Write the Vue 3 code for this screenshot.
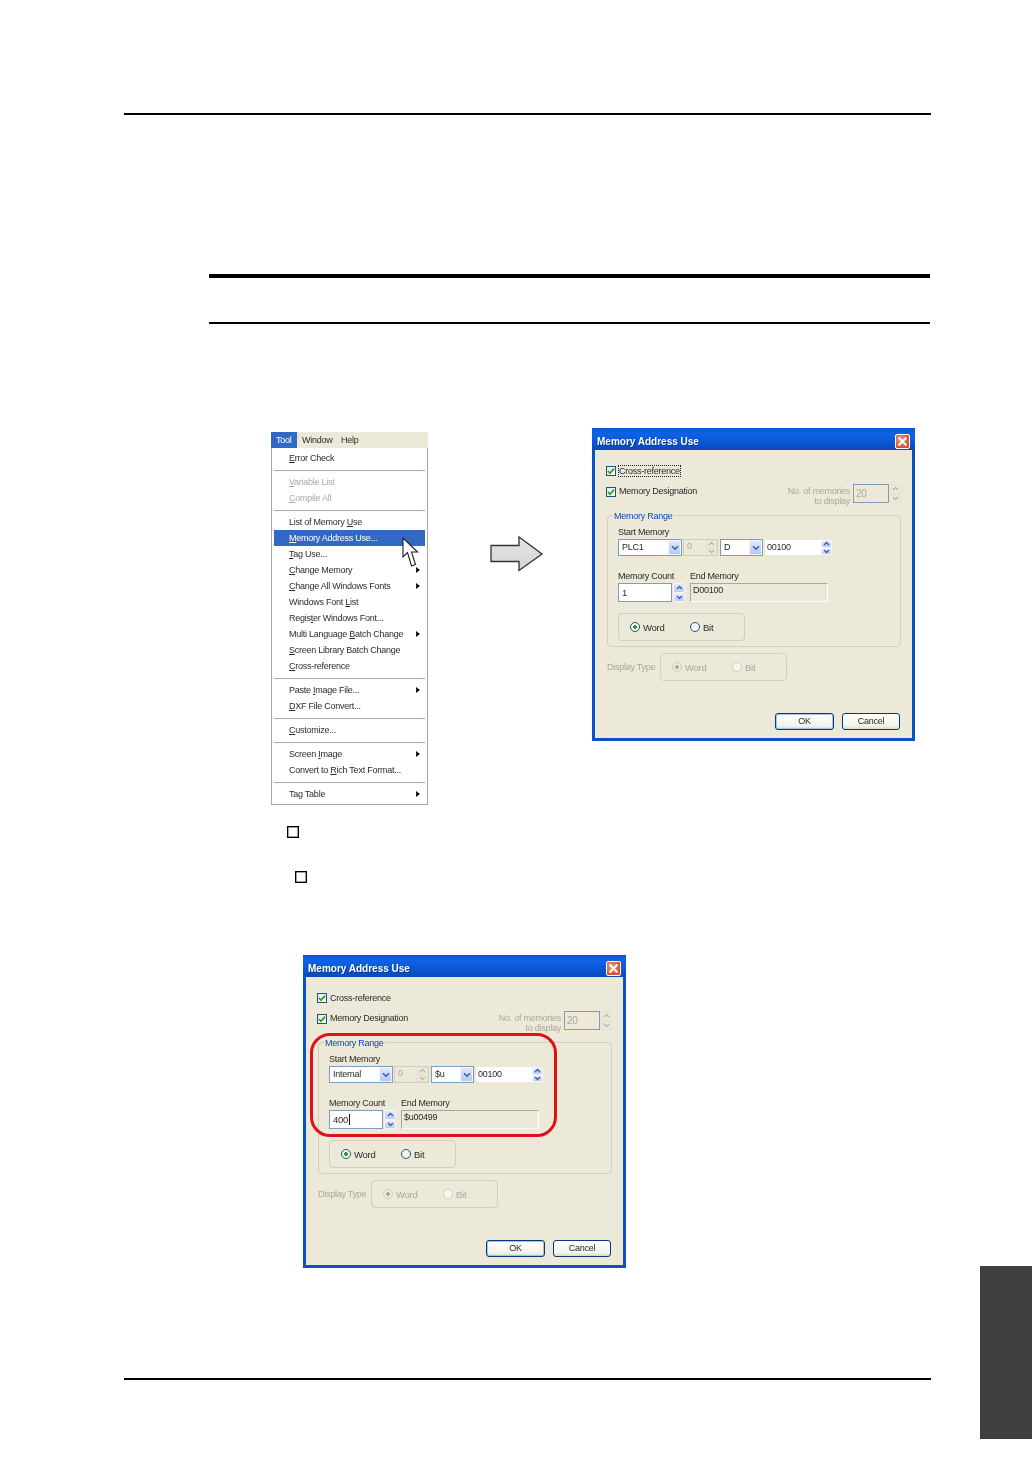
<script setup>
const menu = [
  { h: ['', 'E', 'rror Check'] },
  { sep: true },
  { h: ['', 'V', 'ariable List'], off: true },
  { h: ['', 'C', 'ompile All'], off: true },
  { sep: true },
  { h: ['List of Memory ', 'U', 'se'] },
  { h: ['', 'M', 'emory Address Use...'], active: true },
  { h: ['', 'T', 'ag Use...'] },
  { h: ['', 'C', 'hange Memory'], sub: true },
  { h: ['', 'C', 'hange All Windows Fonts'], sub: true },
  { h: ['Windows Font ', 'L', 'ist'] },
  { h: ['Regis', 't', 'er Windows Font...'] },
  { h: ['Multi Language ', 'B', 'atch Change'], sub: true },
  { h: ['', 'S', 'creen Library Batch Change'] },
  { h: ['', 'C', 'ross-reference'] },
  { sep: true },
  { h: ['Paste ', 'I', 'mage File...'], sub: true },
  { h: ['', 'D', 'XF File Convert...'] },
  { sep: true },
  { h: ['', 'C', 'ustomize...'] },
  { sep: true },
  { h: ['Screen ', 'I', 'mage'], sub: true },
  { h: ['Convert to ', 'R', 'ich Text Format...'] },
  { sep: true },
  { h: ['Ta', 'g', ' Table'], sub: true },
]
const dialogs = [
  { key: 'a', device: 'PLC1', kind: 'D', count: '1', end: 'D00100', focus: true, ring: false, caret: false },
  { key: 'b', device: 'Internal', kind: '$u', count: '400', end: '$u00499', focus: false, ring: true, caret: true },
]
</script>

<template>
  <div class="page">
    <div class="rule-top"></div>
    <div class="note"></div>

    <div class="figure">
      <div class="menu">
        <div class="menubar">
          <span class="top on">Tool</span><span class="top">Window</span><span class="top">Help</span>
        </div>
        <div class="menulist">
          <template v-for="(m, i) in menu" :key="i">
            <div v-if="m.sep" class="sep"></div>
            <div v-else class="item" :class="{ off: m.off, active: m.active, sub: m.sub }">{{ m.h[0] }}<u>{{ m.h[1] }}</u>{{ m.h[2] }}</div>
          </template>
        </div>
        <svg class="cursor" width="17" height="31" viewBox="0 0 17 31">
          <path d="M1 1V20L5.5 15.5 9.5 29 13.5 27.5 9.5 15H15.5Z" fill="#fff" stroke="#222" stroke-width="1.1"/>
        </svg>
      </div>

      <svg class="arrow" width="54" height="36" viewBox="0 0 54 36">
        <defs>
          <linearGradient id="arrowFill" x1="0" y1="0" x2="0" y2="1">
            <stop offset="0" stop-color="#e6e6e6"/>
            <stop offset="1" stop-color="#d4d4d4"/>
          </linearGradient>
        </defs>
        <path d="M1 9.5H29V1L52 18 29 34.5V25.5H1Z" fill="url(#arrowFill)" stroke="#333" stroke-width="1.3"/>
      </svg>

      <div class="boxes">
        <div class="box"></div>
        <div class="box second"></div>
      </div>

      <div v-for="d in dialogs" :key="d.key" class="dialog" :class="'dialog-' + d.key">
        <div class="titlebar">
          <span class="title">Memory Address Use</span>
          <span class="close">
            <svg width="11" height="11" viewBox="0 0 11 11"><path d="M1.5 1.5L9.5 9.5M9.5 1.5L1.5 9.5" stroke="#fff" stroke-width="2.1"/></svg>
          </span>
        </div>
        <div class="body">
          <div class="check-row">
            <span class="check"><svg width="8" height="8" viewBox="0 0 8 8"><path d="M1 4L3 6.2 7 1.6" fill="none" stroke="#21a121" stroke-width="1.7"/></svg></span>
            <span class="check-label" :class="{ focus: d.focus }">Cross-reference</span>
          </div>
          <div class="check-row second">
            <span class="check"><svg width="8" height="8" viewBox="0 0 8 8"><path d="M1 4L3 6.2 7 1.6" fill="none" stroke="#21a121" stroke-width="1.7"/></svg></span>
            <span class="check-label">Memory Designation</span>
            <span class="count-note">No. of memories<br />to display</span>
            <span class="field disabled note-field">20</span>
            <span class="spin off note-spin">
              <i><svg width="7" height="5" viewBox="0 0 7 5"><path d="M1 4L3.5 1.5 6 4" fill="none" stroke="#b9b7a8" stroke-width="1.4"/></svg></i>
              <i><svg width="7" height="5" viewBox="0 0 7 5"><path d="M1 1L3.5 3.5 6 1" fill="none" stroke="#b9b7a8" stroke-width="1.4"/></svg></i>
            </span>
          </div>

          <div class="range">
            <span class="legend">Memory Range</span>
            <div class="lbl">Start Memory</div>
            <div class="controls">
              <span class="select device">{{ d.device }}
                <b class="drop"><svg width="8" height="6" viewBox="0 0 8 6"><path d="M1 1.2L4 4.2 7 1.2" fill="none" stroke="#3a5cb0" stroke-width="1.6"/></svg></b>
              </span>
              <span class="field disabled port">0
                <span class="spin off">
                  <i><svg width="7" height="5" viewBox="0 0 7 5"><path d="M1 4L3.5 1.5 6 4" fill="none" stroke="#b9b7a8" stroke-width="1.4"/></svg></i>
                  <i><svg width="7" height="5" viewBox="0 0 7 5"><path d="M1 1L3.5 3.5 6 1" fill="none" stroke="#b9b7a8" stroke-width="1.4"/></svg></i>
                </span>
              </span>
              <span class="select kind">{{ d.kind }}
                <b class="drop"><svg width="8" height="6" viewBox="0 0 8 6"><path d="M1 1.2L4 4.2 7 1.2" fill="none" stroke="#3a5cb0" stroke-width="1.6"/></svg></b>
              </span>
              <span class="address">
                <span class="address-val">00100</span>
                <span class="spin">
                  <i><svg width="7" height="5" viewBox="0 0 7 5"><path d="M1 4L3.5 1.5 6 4" fill="none" stroke="#3a5cb0" stroke-width="1.4"/></svg></i>
                  <i><svg width="7" height="5" viewBox="0 0 7 5"><path d="M1 1L3.5 3.5 6 1" fill="none" stroke="#3a5cb0" stroke-width="1.4"/></svg></i>
                </span>
              </span>
            </div>
            <div class="lbl-row">
              <span class="lbl count-lbl">Memory Count</span>
              <span class="lbl">End Memory</span>
            </div>
            <div class="count-row">
              <span class="field count"><span :class="{ caret: d.caret }">{{ d.count }}</span></span>
              <span class="spin tall">
                <i><svg width="7" height="5" viewBox="0 0 7 5"><path d="M1 4L3.5 1.5 6 4" fill="none" stroke="#3a5cb0" stroke-width="1.4"/></svg></i>
                <i><svg width="7" height="5" viewBox="0 0 7 5"><path d="M1 1L3.5 3.5 6 1" fill="none" stroke="#3a5cb0" stroke-width="1.4"/></svg></i>
              </span>
              <span class="end">{{ d.end }}</span>
            </div>
            <div class="radios">
              <span class="radio sel"></span><span class="r-text word">Word</span>
              <span class="radio"></span><span class="r-text">Bit</span>
            </div>
          </div>

          <div class="display-row">
            <span class="display-lbl">Display Type</span>
            <div class="radios faded">
              <span class="radio sel"></span><span class="r-text word">Word</span>
              <span class="radio"></span><span class="r-text">Bit</span>
            </div>
          </div>

          <div class="buttons">
            <span class="btn default">OK</span>
            <span class="btn">Cancel</span>
          </div>
        </div>
        <div v-if="d.ring" class="ring"></div>
      </div>
    </div>

    <div class="rule-bottom"></div>
    <div class="tab"></div>
  </div>
</template>

<style>
html, body { margin: 0; background: #fff; }
</style>

<style scoped>
.page {
  position: relative;
  height: 1458px;
  padding-top: 113px;
  box-sizing: border-box;
  overflow: hidden;
  background: #fff;
  font-family: "Liberation Sans", Arial, sans-serif;
}
.rule-top { margin-left: 124px; width: 807px; height: 2px; background: #000; }
.note {
  margin: 159px 0 0 209px;
  width: 721px;
  height: 44px;
  border-top: 4px solid #000;
  border-bottom: 2px solid #000;
}
.figure {
  display: grid;
  grid-template-columns: 157px auto auto;
  justify-content: start;
  margin: 104px 0 0 271px;
}

/* menu */
.menu {
  grid-column: 1; grid-row: 1;
  position: relative;
  margin-top: 4px;
  width: 157px;
  font-size: 9px;
  letter-spacing: -0.25px;
  color: #2c2c2c;
  filter: blur(0.4px);
}
.menubar { display: flex; height: 16px; line-height: 16px; background: #ece9d8; }
.top { padding-left: 5px; width: 34px; }
.top:nth-child(2) { width: 34px; }
.top.on { background: #316ac5; color: #fff; width: 21px; }
.menulist {
  border: 1px solid #aca899;
  border-top: 0;
  padding: 2px;
  background: #fff;
}
.item { position: relative; height: 16px; line-height: 16px; padding-left: 15px; white-space: pre; }
.item.off { color: #a9a9a9; }
.item.active { background: #316ac5; color: #fff; }
.item.sub::after {
  content: "";
  position: absolute;
  right: 5px;
  top: 5px;
  border-left: 4px solid #111;
  border-top: 3px solid transparent;
  border-bottom: 3px solid transparent;
}
.sep { height: 1px; margin: 4px 0 3px; background: #aca899; }
.cursor { position: absolute; left: 131px; top: 105px; }

/* arrow */
.arrow { grid-column: 2; grid-row: 1; margin: 108px 0 0 62px; }

/* squares */
.boxes { grid-column: 1 / span 3; grid-row: 2; margin-top: 21px; }
.box {
  box-sizing: border-box;
  width: 12px;
  height: 12px;
  margin-left: 16px;
  border: 1px solid #000;
  box-shadow: inset 0 0 0 0.5px #444;
}
.box.second { margin: 33px 0 0 24px; }

/* dialog */
.dialog {
  position: relative;
  box-sizing: border-box;
  width: 323px;
  height: 313px;
  border: 3px solid #0a50c8;
  border-top: 0;
  background: #ece9d8;
  font-size: 9px;
  letter-spacing: -0.25px;
  color: #2a2a2a;
  filter: blur(0.35px);
}
.dialog-a { grid-column: 3; grid-row: 1; margin-left: 48px; }
.dialog-b { grid-column: 1 / span 3; grid-row: 3; margin: 72px 0 0 32px; }
.titlebar {
  display: flex;
  align-items: center;
  justify-content: space-between;
  box-sizing: border-box;
  height: 22px;
  margin: 0 -3px;
  padding: 4px 5px 0;
  background: linear-gradient(#0a57d8, #0f62e6 25%, #0a55d2 70%, #0a49b8);
  border-radius: 3px 3px 0 0;
}
.title { font-size: 10px; font-weight: 700; letter-spacing: 0; color: #fff; text-shadow: 1px 1px 0 #0a3a90; }
.close {
  display: flex;
  align-items: center;
  justify-content: center;
  width: 15px;
  height: 15px;
  border: 1px solid #fff;
  border-radius: 2px;
  box-sizing: border-box;
  background: radial-gradient(circle at 35% 35%, #ec9a7a, #da4f2a 70%);
}
.body { padding: 15px 11px 0; }
.check-row { display: flex; align-items: flex-start; height: 12px; }
.check-row .check { margin-top: 1px; }
.check-row.second { height: 19px; margin-top: 7px; }
.check-row.second .check { margin-top: 3px; }
.check-row.second .check-label { margin-top: 1px; }
.check {
  display: flex;
  align-items: center;
  justify-content: center;
  box-sizing: border-box;
  flex: none;
  width: 10px;
  height: 10px;
  border: 1px solid #1c5180;
  background: linear-gradient(135deg, #e8e8e0, #fff);
}
.check-label {
  margin-left: 2px;
  height: 12px;
  line-height: 10px;
  border: 1px solid transparent;
  box-sizing: border-box;
}
.check-label.focus { border: 1px dotted #222; }
.count-note {
  margin-left: auto;
  margin-right: 3px;
  padding-top: 2px;
  text-align: right;
  line-height: 10px;
  color: #aca899;
}
.field {
  box-sizing: border-box;
  display: block;
  border: 1px solid #7f9db9;
  background: #fff;
  padding: 1px 0 0 2px;
  line-height: 11px;
}
.field.disabled { background: #ece9d8; color: #aca899; }
.note-field { width: 36px; height: 19px; font-size: 10px; padding-top: 3px; }
.spin {
  display: flex;
  flex-direction: column;
  width: 11px;
  height: 15px;
  flex: none;
}
.spin i {
  flex: 1;
  display: flex;
  align-items: center;
  justify-content: center;
  background: linear-gradient(#e4ebfb, #bccbf2);
  border: 1px solid #f4f6fd;
  border-radius: 2px;
  box-sizing: border-box;
}
.spin.off i { background: #ece9d8; border-color: #e4e2d2; }
.note-spin { height: 19px; margin-left: 1px; }

.range {
  position: relative;
  margin: 12px 0 0 1px;
  box-sizing: border-box;
  width: 294px;
  height: 132px;
  border: 1px solid #d0d0bf;
  border-radius: 4px;
  padding: 10px 0 0 10px;
}
.legend {
  position: absolute;
  left: 5px;
  top: -6px;
  padding: 0 1px;
  background: #ece9d8;
  color: #0f46c0;
  line-height: 12px;
}
.lbl { line-height: 12px; }
.controls { display: flex; align-items: stretch; height: 17px; margin-top: 1px; }
.select {
  position: relative;
  box-sizing: border-box;
  border: 1px solid #7f9db9;
  background: #fff;
  padding-left: 3px;
  line-height: 15px;
}
.device { width: 64px; }
.kind { width: 43px; margin-left: 2px; }
.drop {
  position: absolute;
  right: 0;
  top: 0;
  bottom: 0;
  width: 13px;
  display: flex;
  align-items: center;
  justify-content: center;
  background: linear-gradient(#dfe8fb, #b7c8f3);
  border: 1px solid #f2f5fd;
  box-sizing: border-box;
}
.port {
  position: relative;
  width: 35px;
  margin-left: 1px;
  border-color: #cfcdbd;
  padding-left: 3px;
}
.port .spin { position: absolute; right: 0; top: 0; }
.address { display: flex; margin-left: 1px; width: 69px; border: 1px solid #ece9d8; box-sizing: border-box; background: #fff; }
.address-val { flex: 1; padding-left: 2px; line-height: 14px; }
.lbl-row { display: flex; margin-top: 14px; }
.count-lbl { width: 72px; }
.count-row { display: flex; height: 19px; margin-top: 1px; }
.count { width: 54px; padding: 3px 0 0 3px; font-size: 9.5px; }
.caret { border-right: 1px solid #111; padding-right: 1px; }
.spin.tall { width: 12px; height: 19px; margin-left: 1px; }
.end {
  box-sizing: border-box;
  width: 138px;
  margin-left: 5px;
  border: 1px solid #aca899;
  border-right-color: #fff;
  border-bottom-color: #fff;
  padding: 1px 0 0 2px;
  line-height: 11px;
}
.radios {
  display: flex;
  align-items: center;
  box-sizing: border-box;
  width: 127px;
  height: 28px;
  margin-top: 11px;
  padding-left: 11px;
  border: 1px solid #d0d0bf;
  border-radius: 4px;
}
.radio {
  box-sizing: border-box;
  width: 10px;
  height: 10px;
  flex: none;
  border: 1px solid #1c5180;
  border-radius: 50%;
  background: #f6f6f0;
}
.radio.sel { background: radial-gradient(circle, #21a121 0 1.6px, #f6f6f0 2px); }
.r-text { margin-left: 3px; font-size: 9.5px; }
.r-text.word { width: 47px; }
.faded { margin-top: 0; }
.faded .r-text { color: #aca899; }
.faded .radio { border-color: #cfcdbd; }
.faded .radio.sel { background: radial-gradient(circle, #aca899 0 1.6px, #ece9d8 2px); }

.display-row { display: flex; margin: 6px 0 0 1px; align-items: center; }
.display-lbl { width: 53px; color: #aca899; }
.buttons { display: flex; justify-content: flex-end; gap: 8px; margin: 32px 1px 0 0; }
.btn {
  box-sizing: border-box;
  width: 58px;
  height: 17px;
  line-height: 15px;
  text-align: center;
  border: 1px solid #003c74;
  border-radius: 3px;
  background: linear-gradient(#fff, #f3f2ea 80%, #dcd8c8);
}
.btn.default { width: 59px; box-shadow: inset 0 0 0 1px #a8c0ea; }
.ring {
  position: absolute;
  left: 4px;
  top: 78px;
  box-sizing: border-box;
  width: 247px;
  height: 104px;
  border: 3px solid #e0101a;
  border-radius: 20px;
}

.rule-bottom { margin: 110px 0 0 124px; width: 807px; height: 2px; background: #000; }
.tab {
  position: absolute;
  left: 980px;
  top: 1266px;
  width: 52px;
  height: 173px;
  background: #3f3f3f;
}
</style>
